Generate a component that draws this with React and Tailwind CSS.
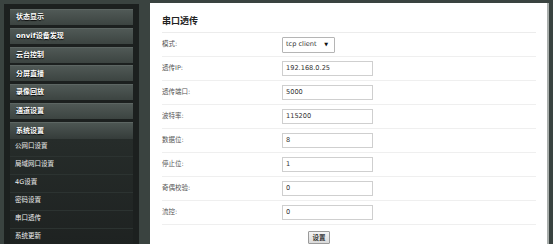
import React from "react";

const mainItems = ["状态显示", "onvif设备发现", "云台控制", "分屏直播", "录像回放", "通道设置"];
const subItems = ["公网口设置", "局域网口设置", "4G设置", "密码设置", "串口透传", "系统更新"];

const rows = [
  { label: "模式:", value: "tcp client", select: true },
  { label: "透传IP:", value: "192.168.0.25" },
  { label: "透传端口:", value: "5000" },
  { label: "波特率:", value: "115200" },
  { label: "数据位:", value: "8" },
  { label: "停止位:", value: "1" },
  { label: "奇偶校验:", value: "0" },
  { label: "流控:", value: "0" },
];

export default function App() {
  return (
    <div className="w-[553px] h-[244px] bg-[#3a4340] flex items-start overflow-hidden font-['DejaVu_Sans','Noto_Sans_CJK_SC',sans-serif]">
      <div className="ml-[4px] mt-[4px] w-[135px] h-[240px] bg-[#1c201f] pt-[5px] px-[6px] flex flex-col">
        {mainItems.map((t) => (
          <div
            key={t}
            className="h-[16px] mb-[2.8px] shrink-0 bg-gradient-to-b from-[#505956] to-[#3c4441] border-t border-[#5d6663] flex items-center pl-[6px] text-[7px] font-bold text-white [text-shadow:0_1px_1px_#000]"
          >
            {t}
          </div>
        ))}
        <div className="h-[17px] shrink-0 bg-gradient-to-b from-[#4d5653] to-[#353c3a] border-t border-[#5d6663] flex items-center pl-[6px] text-[7px] font-bold text-white [text-shadow:0_1px_1px_#000]">
          系统设置
        </div>
        <div className="flex flex-col bg-gradient-to-b from-[#262c2a] to-[#1e2221]">
          {subItems.map((t) => (
            <div
              key={t}
              className="h-[18px] shrink-0 border-b border-[#2c3331] flex items-center pl-[5px] text-[6.5px] text-[#eeeeee]"
            >
              {t}
            </div>
          ))}
        </div>
      </div>

      <div className="ml-[11px] mt-[3px] w-[399px] h-[241px] bg-white border-r-2 border-[#a9aeac] pl-[12px] pr-[11px]">
        <div className="h-[30px] border-b border-[#ececec] flex items-center pt-[7px] text-[9px] font-bold text-[#222] font-['Noto_Sans_CJK_SC',sans-serif]">
          串口透传
        </div>
        {rows.map((r) => (
          <div key={r.label} className="h-[24px] border-b border-[#efefef] flex items-center">
            <div className="w-[120px] text-[6.5px] text-[#555]">{r.label}</div>
            {r.select ? (
              <div className="w-[53px] h-[16px] border border-[#b5b5b5] rounded-[1px] flex items-center pl-[3px] pr-[6px] justify-between text-[6.6px] text-[#333]">
                <span>{r.value}</span>
                <span className="text-[5px] text-[#111]">▼</span>
              </div>
            ) : (
              <div className="w-[91px] h-[15px] border border-[#cfcfcf] flex items-center pl-[3px] text-[6.6px] text-[#333]">
                {r.value}
              </div>
            )}
          </div>
        ))}
        <div className="pt-[6px] pl-[146px]">
          <div className="w-[22px] h-[13px] bg-gradient-to-b from-[#f4f4f4] to-[#d9d9d9] border border-[#9a9a9a] rounded-[1px] flex items-center justify-center text-[6.5px] font-bold text-[#333] font-['Noto_Sans_CJK_SC',sans-serif]">
            设置
          </div>
        </div>
      </div>
    </div>
  );
}
